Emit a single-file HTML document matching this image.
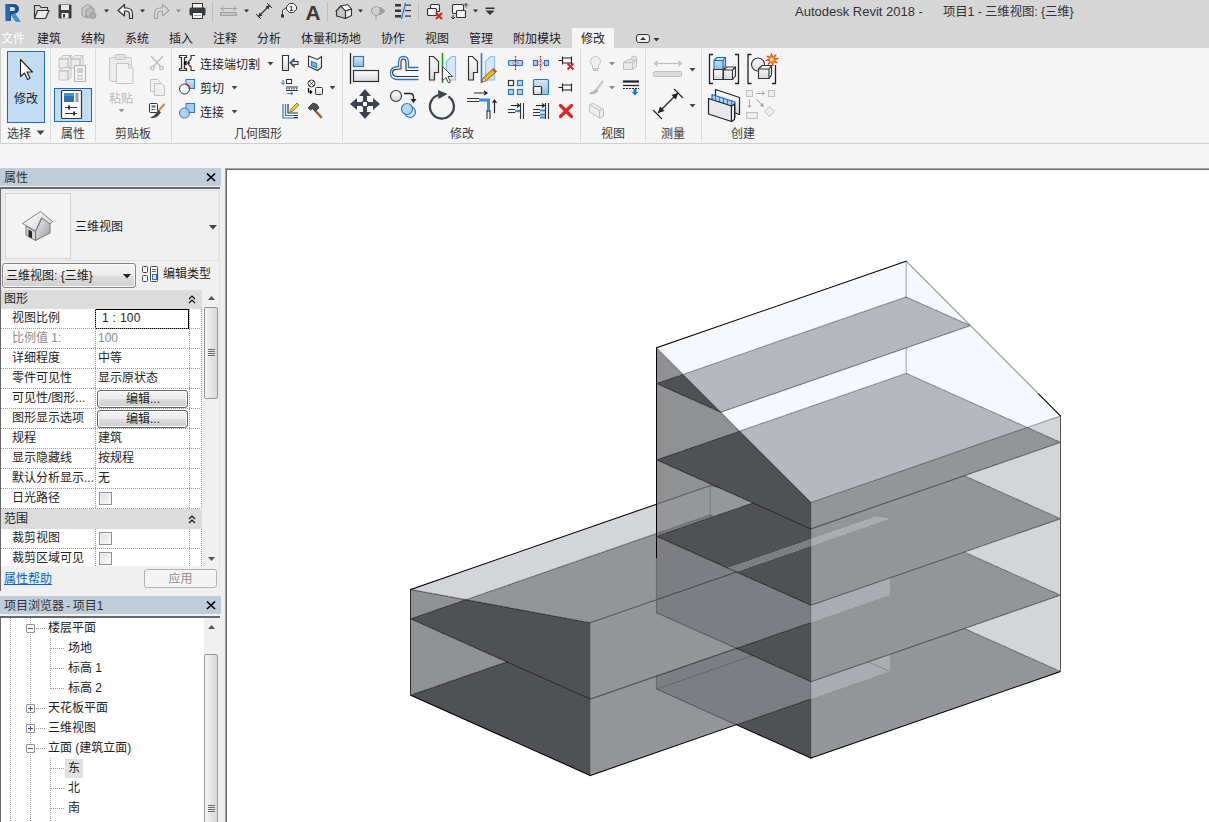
<!DOCTYPE html>
<html lang="zh-CN"><head><meta charset="utf-8"><title>Autodesk Revit 2018 - 项目1 - 三维视图: {三维}</title>
<style>
*{box-sizing:border-box;margin:0;padding:0}
html,body{width:1209px;height:822px;overflow:hidden;background:#f5f5f5}
body{font-family:"Liberation Sans","Noto Sans CJK SC",sans-serif;font-size:12px;color:#1e1e1e;position:relative}
.abs{position:absolute}
.t{position:absolute;white-space:nowrap;line-height:16px}
#titlebar{position:absolute;left:0;top:0;width:1209px;height:48px;background:#d6d6d6}
#ribbon{position:absolute;left:0;top:48px;width:1209px;height:96px;background:#f5f5f5;border-bottom:1px solid #cfcfcf}
.vsep{position:absolute;width:1px;background:#d9d9d9;top:49px;height:93px}
.plabel{position:absolute;top:126px;line-height:16px;white-space:nowrap;color:#3a3a3a}
.ptitle{position:absolute;left:0;width:221px;height:18px;background:#bfcddb;color:#333}
.ptitle span{position:absolute;left:4px;top:2px;line-height:16px}
svg{position:absolute;overflow:visible}
.dh{height:1px;background-image:linear-gradient(to right,#9a9a9a 50%,transparent 50%);background-size:2px 1px}
.dv{width:1px;background-image:linear-gradient(to bottom,#9a9a9a 50%,transparent 50%);background-size:1px 2px}
</style></head>
<body>
<div id="titlebar"></div>
<div class="abs" style="left:572px;top:28px;width:42px;height:21px;background:#f5f5f5"></div>
<div class="t" style="left:795px;top:4px;font-size:13px;color:#333;letter-spacing:0px">Autodesk Revit 2018 -</div>
<div class="t" style="left:943px;top:4px;font-size:12.400px;color:#333;letter-spacing:-0.1px">项目1 - 三维视图: {三维}</div>
<div class="t" style="left:1px;top:31px;color:#fff">文件</div>
<div class="t" style="left:37px;top:31px">建筑</div>
<div class="t" style="left:81px;top:31px">结构</div>
<div class="t" style="left:125px;top:31px">系统</div>
<div class="t" style="left:169px;top:31px">插入</div>
<div class="t" style="left:213px;top:31px">注释</div>
<div class="t" style="left:257px;top:31px">分析</div>
<div class="t" style="left:301px;top:31px">体量和场地</div>
<div class="t" style="left:381px;top:31px">协作</div>
<div class="t" style="left:425px;top:31px">视图</div>
<div class="t" style="left:469px;top:31px">管理</div>
<div class="t" style="left:513px;top:31px">附加模块</div>
<div class="t" style="left:581px;top:31px">修改</div>
<svg id="qat" width="1209" height="48" viewBox="0 0 1209 48" style="left:0;top:0">
<!-- R logo -->
<g>
<path d="M5.500 4h7q6.500 0 6.500 5q0 3.800-4 4.800l5.500 7.700h-4.800l-4.700-7v6.500h-5z" fill="#1d4f8f"/>
<path d="M10 7h2.800q2.400 0 2.400 2t-2.400 2.100h-2.800z" fill="#d6d6d6"/>
<path d="M5.500 4h4.500v17h-4.500z" fill="#2468b4"/>
<path d="M11.500 14l3.500-.5l5.500 8h-4.800z" fill="#3d94de"/>
</g>
<!-- open folder -->
<g stroke="#333" stroke-width="1.2" fill="none" stroke-linejoin="round">
<path d="M34.500 18.500v-13h5l1.500 2h6.500v3" />
<path d="M34.500 18.500l3-8h11.500l-3.500 8z" fill="#e9e9e9"/>
</g>
<!-- save -->
<g>
<rect x="58.500" y="4.500" width="13" height="14" rx="1" fill="#3d3d3d"/>
<rect x="61" y="5" width="8" height="5" fill="#e8e8e8"/>
<rect x="61.500" y="13" width="7" height="5.500" fill="#e8e8e8"/>
<rect x="63" y="14" width="2" height="3.500" fill="#3d3d3d"/>
</g>
<!-- sync (disabled) -->
<g stroke="#9a9a9a" fill="#c9c9c9" stroke-width="1">
<path d="M82 8l5-3.500l5 2v8l-5 3.500l-5-2.500z"/>
<path d="M86 10l4-2.500l4 1.500v6l-4 3l-4-2z" fill="#bdbdbd"/>
<circle cx="93" cy="15.500" r="3" fill="#b0b0b0"/>
</g>
<path d="M104.0 9.500h5l-2.500 3z" fill="#333"/>
<!-- undo -->
<path d="M118 10.500l6.500-6v3.500h2q6 0 6 6v4.500h-3v-4q0-3.500-3.500-3.500h-1.500v5z" fill="#f0f0f0" stroke="#333" stroke-width="1.200" stroke-linejoin="round"/>
<path d="M140.0 9.500h5l-2.500 3z" fill="#333"/>
<!-- redo disabled -->
<path d="M169 10.500l-6.500-6v3.500h-2q-6 0-6 6v4.500h3v-4q0-3.500 3.500-3.500h1.500v5z" fill="#dcdcdc" stroke="#a4a4a4" stroke-width="1.200" stroke-linejoin="round"/>
<path d="M176.0 9.500h5l-2.500 3z" fill="#8a8a8a"/>
<!-- print -->
<g>
<rect x="192.500" y="3.500" width="10" height="5" fill="#f4f4f4" stroke="#333"/>
<rect x="189.500" y="7.500" width="16" height="8" rx="1.500" fill="#3a3a3a"/>
<rect x="192.500" y="12.500" width="10" height="6" fill="#f4f4f4" stroke="#333"/>
<rect x="194" y="15" width="7" height="1" fill="#7aa7d6"/>
</g>
<rect x="212" y="2" width="1" height="20" fill="#bdbdbd"/>
<!-- measure disabled -->
<g stroke="#a0a0a0" fill="none">
<path d="M221 8.500h15M221 8.500l2.500-2.500M221 8.500l2.500 2.500M236 8.500l-2.500-2.500M236 8.500l-2.500 2.500"/>
<rect x="220.500" y="12.500" width="16" height="3" fill="#c4c4c4"/>
</g>
<path d="M244.0 9.500h5l-2.500 3z" fill="#333"/>
<!-- aligned dim -->
<g stroke="#333" stroke-width="1.200" fill="#333">
<path d="M258 17l12-12" />
<path d="M256 14l5 5M267 3l5 5" stroke-width="1"/>
<path d="M258 17l1.500-4.500l3 3zM270 5l-1.500 4.500l-3-3z" stroke="none"/>
</g>
<!-- tag -->
<g stroke="#333" fill="#f4f4f4">
<path d="M282.500 15.500v-5l4-3"/>
<rect x="281.500" y="15" width="2" height="2" fill="#333"/>
<path d="M286.500 6.500l3-3h4l3 3v3l-3 3h-4l-3-3z"/>
</g>
<text x="289.200" y="11" font-family="'Liberation Sans',sans-serif" font-size="7" font-weight="bold" fill="#222">1</text>
<!-- A text -->
<text x="305.500" y="20" font-family="'Liberation Sans',sans-serif" font-size="21" font-weight="bold" fill="#3a3a3a" textLength="15" lengthAdjust="spacingAndGlyphs">A</text>
<rect x="327" y="2" width="1" height="20" fill="#bdbdbd"/>
<!-- 3d house -->
<g stroke="#333" stroke-width="1.100" stroke-linejoin="round">
<path d="M336.500 11l4.500-5l4.500 5v7.500l-9-2.500z" fill="#c4c4c4"/>
<path d="M341 6l6.500-1.500l4 4.500l-6 2z" fill="#fafafa"/>
<path d="M345.500 11l6-2v6.500l-6 3z" fill="#ececec"/>
<path d="M335.500 11.500l5.500-6" fill="none"/>
</g>
<path d="M358.0 9.500h5l-2.500 3z" fill="#333"/>
<!-- section disabled -->
<g stroke="#9e9e9e" fill="#cfcfcf">
<circle cx="376" cy="11" r="4.500"/>
<path d="M380 7l5 4l-5 4z" fill="#9e9e9e"/>
<path d="M376 15.500v4"/>
</g>
<!-- thin lines -->
<g fill="#333">
<rect x="395" y="4" width="6" height="2.500"/><rect x="395" y="9.500" width="6" height="2.500"/><rect x="395" y="15" width="6" height="2.500"/>
<rect x="405" y="4.500" width="6" height="1.200"/><rect x="405" y="10" width="6" height="1.200"/><rect x="405" y="15.500" width="6" height="1.200"/>
<path d="M405.500 3l-4 16" stroke="#2a7de1" stroke-width="1.300" fill="none"/>
</g>
<rect x="418" y="2" width="1" height="20" fill="#bdbdbd"/>
<!-- close hidden -->
<g stroke="#333" fill="#f2f2f2" stroke-width="1.100">
<rect x="430.500" y="4.500" width="9" height="7" rx="1"/>
<rect x="427.500" y="8.500" width="9" height="7" rx="1"/>
<path d="M436 13l6 6M442 13l-6 6" stroke="#d81e1e" stroke-width="2" fill="none"/>
</g>
<!-- switch windows -->
<g stroke="#333" fill="#f2f2f2" stroke-width="1.100">
<rect x="452.500" y="4.500" width="11" height="9" rx="1"/>
<rect x="456.500" y="10.500" width="9" height="7" rx="1"/>
<path d="M466 3.500v4M464 5.500l2-2l2 2M453 15v4M451 17l2 2l2-2" fill="none" stroke-width="1"/>
</g>
<path d="M473.0 9.500h5l-2.500 3z" fill="#333"/>
<path d="M485.500 7.500h9v1.500h-9zM485.500 10.500h9l-4.500 4.500z" fill="#333"/>
<!-- ribbon minimize toggle -->
<g>
<rect x="636.500" y="34.500" width="13" height="8" rx="2.500" fill="#f0f0f0" stroke="#333"/>
<path d="M640 40h6l-3-3z" fill="#333"/>
<path d="M653.500 38h6l-3 3.500z" fill="#333"/>
</g>
</svg>
<div id="ribbon"></div>
<div class="abs" style="left:0;top:48px;width:1px;height:95px;background:#cdcdcd"></div>
<div class="vsep" style="left:50px"></div><div class="vsep" style="left:95px"></div><div class="vsep" style="left:171px"></div><div class="vsep" style="left:342px"></div><div class="vsep" style="left:580px"></div><div class="vsep" style="left:645px"></div><div class="vsep" style="left:701px"></div>
<div class="abs" style="left:7px;top:51px;width:38px;height:72px;background:#c2dcf3;border:1px solid #1a6ac4"></div>
<div class="abs" style="left:54px;top:88px;width:38px;height:34px;background:#c2dcf3;border:1px solid #1a6ac4"></div>
<div class="t" style="left:14px;top:91px">修改</div>
<div class="t" style="left:109px;top:91px;color:#b9b9b9">粘贴</div>
<div class="plabel" style="left:7px">选择</div>
<div class="plabel" style="left:61px">属性</div>
<div class="plabel" style="left:115px">剪贴板</div>
<div class="plabel" style="left:234px">几何图形</div>
<div class="plabel" style="left:450px">修改</div>
<div class="plabel" style="left:601px">视图</div>
<div class="plabel" style="left:661px">测量</div>
<div class="plabel" style="left:731px">创建</div>
<div class="t" style="left:200px;top:57px">连接端切割</div>
<div class="t" style="left:200px;top:81px">剪切</div>
<div class="t" style="left:200px;top:105px">连接</div>
<svg id="rib" width="1209" height="144" viewBox="0 0 1209 144" style="left:0;top:0">
<defs>
<linearGradient id="gw" x1="0" y1="0" x2="0" y2="1"><stop offset="0" stop-color="#ffffff"/><stop offset="1" stop-color="#d4d7dc"/></linearGradient>
<linearGradient id="gb" x1="0" y1="0" x2="0" y2="1"><stop offset="0" stop-color="#d6e8f5"/><stop offset="1" stop-color="#8fbfe0"/></linearGradient>
</defs>
<!-- small arrows -->
<g fill="#444">
<path d="M36.500 130.500h8l-4 4.500z"/>
<path d="M118.500 109h6l-3 3.500z" fill="#9a9a9a"/>
<path d="M267.500 62h6l-3 3.500z"/><path d="M231.500 86h6l-3 3.500z"/><path d="M231.500 110h6l-3 3.500z"/>
<path d="M329.500 86h6l-3 3.500z"/>
<path d="M609 62h6l-3 3.500z" fill="#8a8a8a"/><path d="M609 86h6l-3 3.500z" fill="#8a8a8a"/>
<path d="M689.500 68h6l-3 3.500z"/><path d="M689.500 104h6l-3 3.500z"/>
</g>
<!-- modify cursor -->
<path d="M20.500 59.500v17l4-3.500l3 6.500l2.500-1.200l-3-6.300h5.500z" fill="#fff" stroke="#222" stroke-width="1.100" stroke-linejoin="round"/>
<!-- type properties (disabled) -->
<g stroke="#c4c4c4" fill="#ececec">
<path d="M59 59l4-3.500h8l-3 3.500zM59 59h9v9h-9zM68 59l3-3.500v9l-3 3.500z"/>
<path d="M71 59l4-3.500h8l-3 3.500zM71 59h9v9h-9zM80 59l3-3.500v9l-3 3.500z"/>
<path d="M59 71l4-3.500h8l-3 3.500zM59 71h9v9h-9zM68 71l3-3.500v9l-3 3.500z"/>
<rect x="74.500" y="65.500" width="11" height="16" fill="#f4f4f4" stroke="#b0b0b0"/>
<rect x="77" y="68" width="6" height="5" fill="#cfcfcf" stroke="none"/>
<path d="M77 76h6M77 79h6" stroke="#b0b0b0"/>
</g>
<!-- properties icon -->
<g>
<rect x="61.500" y="90.500" width="20" height="28" rx="1" fill="#fbfbfb" stroke="#333" stroke-width="1.200"/>
<rect x="64" y="93" width="10" height="9" fill="#2f6fb3"/>
<rect x="64" y="93" width="10" height="3" fill="#4c8ccc"/>
<rect x="75.500" y="93" width="3" height="9" fill="#9a9a9a"/>
<path d="M65 107.500h12M65 113.500h12" stroke="#333" stroke-width="1.200"/>
<rect x="68" y="105.500" width="2" height="4" fill="#333"/><rect x="73" y="111.500" width="2" height="4" fill="#333"/>
</g>
<!-- paste disabled -->
<g stroke="#c6c6c6" fill="#ececec">
<rect x="109.500" y="57.500" width="22" height="24" rx="2"/>
<rect x="115.500" y="54.500" width="10" height="5" rx="1.500" fill="#e2e2e2"/>
<path d="M116.500 63.500h12l4.500 4.500v15.500h-16.500z" fill="#f3f3f3"/>
<path d="M128.500 63.500v4.500h4.500" fill="none"/>
</g>
<!-- cut disabled -->
<g stroke="#bdbdbd" stroke-width="1.300" fill="none">
<path d="M151 56l10 11M163 56l-10 11"/><circle cx="152.500" cy="68" r="1.800"/><circle cx="161.500" cy="68" r="1.800"/>
</g>
<!-- copy disabled -->
<g stroke="#c2c2c2" fill="#efefef">
<path d="M150.500 79.500h7l3 3v9h-10z"/><path d="M154.500 83.500h7l3 3v9h-10z"/>
</g>
<!-- match type -->
<g>
<rect x="149.500" y="103.500" width="8" height="9" rx="1" fill="#f6f6f6" stroke="#333"/>
<rect x="151.500" y="105.500" width="4" height="2" fill="#2f6fb3"/><path d="M151.500 109.500h2M154.500 109.500h1" stroke="#333"/>
<path d="M164.500 104l-7 8" stroke="#c58a3a" stroke-width="2"/>
<path d="M158.500 110l-3 4q-2 3-5.500 3.500q5 1.500 8-1.500l3-3.500z" fill="#3d4450"/>
</g>
<!-- cope -->
<g stroke="#333" stroke-width="1.200" fill="url(#gw)">
<path d="M179.500 55.500h7v2h-2v11h2v2h-7v-2h2v-11h-2z"/>
<path d="M195 55.500h-4v3.500l-2.500 2.500v3l2.500 2.500v3.500h4" fill="none"/>
<path d="M184 63h6M184 63l2.500-2M184 63l2.500 2" fill="none" stroke="#000"/>
</g>
<!-- cut geometry -->
<g>
<rect x="187.500" y="79.500" width="7" height="9" fill="url(#gb)" stroke="#2a78c8"/>
<rect x="186" y="79.500" width="8.500" height="9" fill="url(#gb)" stroke="#2a78c8"/>
<circle cx="184.500" cy="89" r="5" fill="#fbfbfb" stroke="#333"/>
<path d="M186 84.200a5 5 0 0 1 3.400 5" stroke="#e01010" stroke-width="1.400" fill="none"/>
</g>
<!-- join geometry -->
<g>
<rect x="186" y="103.500" width="8.500" height="9" fill="#a9cde8" stroke="#2a78c8"/>
<circle cx="184.500" cy="113" r="5" fill="#a9cde8" fill-opacity="0.85" stroke="#2a78c8"/>
</g>
<!-- unjoin/cope2 -->
<g stroke="#333" stroke-width="1.100">
<path d="M282.500 55.500h6v15h-6z" fill="url(#gw)"/>
<path d="M290 63l4-4v2.500h4v3h-4v2.500z" fill="#dfe3e8"/>
<path d="M291 63l2.500-2.200M291 63l2.500 2.200" stroke="#2a78c8" fill="none"/>
</g>
<!-- wall opening -->
<g stroke="#333" stroke-width="1.100">
<path d="M308.500 56l9 3.500l4-3v11l-4 3l-9-4z" fill="url(#gw)"/>
<path d="M311.500 61.500l5 1.800v4.200l-5-1.800z" fill="#7fb4e0" stroke="#2a78c8"/>
</g>
<!-- beam/column joins -->
<g>
<path d="M283 80v4M281.500 82.500l1.500 2l1.500-2" stroke="#2a78c8" fill="none"/>
<rect x="286.500" y="79.500" width="5" height="4" fill="#fff" stroke="#333"/>
<path d="M286 87h12M286 90.500h12" stroke="#333" stroke-width="1.200"/>
<path d="M286 88.800h12" stroke="#333" stroke-dasharray="1.500 1"/>
<path d="M287 93.500h6M291 92l2 1.500l-2 1.500" stroke="#2a78c8" fill="none"/>
</g>
<!-- switch join order -->
<g stroke="#333">
<circle cx="311.500" cy="83.500" r="3.500" fill="#f4f4f4"/><path d="M309 81l5 5M314 81l-5 5" stroke-width="0.800"/>
<rect x="315.500" y="87.500" width="7" height="7" rx="1" fill="url(#gw)"/>
<path d="M308.500 88v4h3M310 90.500l1.800 1.500l-1.800 1.500" fill="none" stroke="#000" stroke-width="1.200"/>
</g>
<!-- paint -->
<g>
<path d="M283 104v14h15" stroke="#2a78c8" stroke-width="1.200" fill="none"/>
<path d="M285.500 104v11.500h12" stroke="#2a78c8" stroke-width="1.200" fill="none"/>
<path d="M288 104v9h10" stroke="#333" stroke-width="1.200" fill="none"/>
<path d="M290 112l1-3l6-6l2 2l-6 6z" fill="#f2c230" stroke="#7a5a10" stroke-width="0.700"/>
<path d="M294 115.500h4M294 117.500h4" stroke="#333"/>
</g>
<!-- demolish hammer -->
<g>
<path d="M313 108l8 9" stroke="#9a5a48" stroke-width="2.600" stroke-linecap="round"/>
<path d="M308 108l5-5l4 1.500l2 3.500l-4 3l-2.500-2.500l-2 1.500z" fill="#4a4f58" stroke="#2c2f35" stroke-width="0.800"/>
</g>
<!-- ALIGN -->
<g>
<path d="M350.500 53v31" stroke="#222" stroke-width="1.300"/>
<rect x="353.500" y="56.500" width="10" height="10" fill="url(#gb)" stroke="#2a78c8" stroke-width="1.200"/>
<rect x="353.500" y="70.500" width="25" height="11" fill="url(#gw)" stroke="#333" stroke-width="1.200"/>
</g>
<!-- OFFSET -->
<g fill="none">
<path d="M418.500 67.500h-10v-5q0-6-5-6t-5 6v4q-8 0-8 6.500t7 6.500h21" stroke="#2a78c8" stroke-width="1.300"/>
<path d="M418.500 70.500h-12.500v-8q0-3.500-2.500-3.500t-2.500 3.500v6.500q-8.500-.5-8.500 3.500t5 4h21" stroke="#333" stroke-width="1.100"/>
</g>
<!-- MIRROR pick -->
<g>
<path d="M429.500 56.500h4l5 5v11h-4v7.500h-5z" fill="url(#gw)" stroke="#333" stroke-width="1.200"/>
<path d="M455.500 56.500h-4l-5 5v18.500h9z" fill="#d4e8f6" stroke="#8fbfe0" stroke-width="1.200"/>
<path d="M442.500 53v30" stroke="#16a016" stroke-width="1.600"/>
<path d="M442.500 66.500v14l3.500-3l2.500 5.500l2-1l-2.500-5.500h4.500z" fill="#fff" stroke="#333" stroke-width="0.900"/>
</g>
<!-- MIRROR draw -->
<g>
<path d="M468.500 56.500h4l5 5v11h-4v7.500h-5z" fill="url(#gw)" stroke="#333" stroke-width="1.200"/>
<path d="M494.500 56.500h-4l-5 5v18.500h9z" fill="#d4e8f6" stroke="#8fbfe0" stroke-width="1.200"/>
<path d="M481.500 53v30" stroke="#2a78c8" stroke-width="1.600"/>
<path d="M482 82l1.500-4.500l10-9l3 3l-10 9z" fill="#f4b820" stroke="#6b4a10" stroke-width="0.800"/>
<path d="M482 82l1.500-4.500l3 3z" fill="#f6e6c8" stroke="#6b4a10" stroke-width="0.600"/>
<path d="M492 69.800l1.800-1.600l3 3l-1.800 1.600z" fill="#b5651d"/>
</g>
<!-- MOVE -->
<g fill="#3d4450">
<path d="M365 89l6 7h-4v5h-4v-5h-4zM365 119l6-7h-4v-5h-4v5h-4zM350 104l7-6v4h5v4h-5v4zM380 104l-7-6v4h-5v4h5v4z"/>
<rect x="362.500" y="101.500" width="5" height="5" fill="#fff" stroke="#3d4450"/>
</g>
<!-- COPY -->
<g>
<circle cx="396" cy="96" r="5.500" fill="url(#gw)" stroke="#333" stroke-width="1.100"/>
<path d="M404 93.500h6q3.500 0 3.500 3.500v3" fill="none" stroke="#222" stroke-width="1.300"/><path d="M410.500 99h6l-3 4z" fill="#222"/>
<circle cx="410" cy="112" r="5.500" fill="#d4e8f6" stroke="#2a78c8" stroke-width="1.200"/>
<circle cx="407" cy="109" r="5.500" fill="#b5d6ee" stroke="#2a78c8" stroke-width="1.200"/>
</g>
<!-- ROTATE -->
<g>
<path d="M448.500 96.500a12 12 0 1 1 -10 -1.500" fill="none" stroke="#3d4450" stroke-width="2.300"/>
<path d="M438 90l9.500 4l-9 5z" fill="#3d4450"/>
</g>
<!-- TRIM -->
<g fill="none">
<path d="M467 98.500h12M467 101.500h12" stroke="#333" stroke-width="1.100"/>
<path d="M479 100h9.500v12" stroke="#3b8eea" stroke-width="3"/>
<path d="M487 110v9M490 110v9" stroke="#333" stroke-width="1.100"/>
<path d="M474 93h13M484 91l3 2l-3 2" stroke="#222" stroke-width="1.200"/>
<path d="M494.500 113v-13M492.500 103l2-3l2 3" stroke="#222" stroke-width="1.200"/>
</g>
<!-- small modify icons col1 -->
<g>
<rect x="508.500" y="60.500" width="14" height="5" rx="1" fill="#b5d6ee" stroke="#2a78c8" stroke-width="1.200"/>
<path d="M515.500 56v14" stroke="#e01010" stroke-dasharray="1.500 1" stroke-width="1.200"/>
<circle cx="515.500" cy="63" r="2.500" fill="none" stroke="#e01010" stroke-dasharray="1 1" stroke-width="0.800"/>
</g>
<g>
<rect x="533.500" y="60.500" width="4" height="5" fill="#b5d6ee" stroke="#2a78c8" stroke-width="1.200"/><rect x="544.500" y="60.500" width="4" height="5" fill="#b5d6ee" stroke="#2a78c8" stroke-width="1.200"/>
<path d="M540.500 56v14" stroke="#e01010" stroke-dasharray="1.500 1" stroke-width="1.200"/>
<circle cx="540.500" cy="63" r="2.500" fill="none" stroke="#e01010" stroke-dasharray="1 1" stroke-width="0.800"/>
</g>
<g>
<path d="M558.500 60.500h4M562.500 56.500v8M571.500 56.500v8M562.500 58h9M562.500 63h9" stroke="#222" fill="none" stroke-width="1.100"/>
<path d="M567.500 63.500l6 6M573.500 63.500l-6 6" stroke="#d81e1e" stroke-width="1.800"/>
</g>
<g fill="#b5d6ee" stroke="#2a78c8" stroke-width="1.200">
<rect x="508.500" y="80.500" width="5" height="5" fill="#fff" stroke="#333"/><rect x="517.500" y="80.500" width="5" height="5"/><rect x="508.500" y="89.500" width="5" height="5"/><rect x="517.500" y="89.500" width="5" height="5"/>
</g>
<g>
<rect x="533.500" y="79.500" width="15" height="15" rx="1" fill="url(#gb)" stroke="#2a78c8" stroke-width="1.200"/>
<rect x="533.500" y="86.500" width="8" height="8" rx="1" fill="url(#gw)" stroke="#333" stroke-width="1.200"/>
</g>
<g><path d="M558.500 87.500h4M562.500 83.500v8M571.500 83.500v8M562.500 85h9M562.500 90h9" stroke="#222" fill="none" stroke-width="1.100"/></g>
<g fill="none">
<path d="M508 109.500h7M508 112.500h7" stroke="#333" stroke-width="1.100"/><path d="M515 111h6" stroke="#3b8eea" stroke-width="2.400"/>
<path d="M520.500 103v16M523.500 103v16" stroke="#333" stroke-width="1.100"/>
<path d="M511 105.500h8M517 103.500l2.500 2l-2.500 2" stroke="#222" stroke-width="1.100"/>
</g>
<g fill="none">
<path d="M533 109.500h7M533 112.500h7M533 115.500h7" stroke="#333" stroke-width="1.100"/><path d="M540 110.500h6M540 114.500h6M540 117.500h6" stroke="#3b8eea" stroke-width="1.800"/>
<path d="M545.500 103v16M548.500 103v16" stroke="#333" stroke-width="1.100"/>
<path d="M536 105.500h8M542 103.500l2.500 2l-2.500 2" stroke="#222" stroke-width="1.100"/>
</g>
<path d="M560.500 105.500l11 11M571.500 105.500l-11 11" stroke="#e02424" stroke-width="3.200" stroke-linecap="round"/>
<!-- view panel disabled icons -->
<g stroke="#c0c0c0" fill="#f0f0f0">
<path d="M590.500 61.500a5 5 0 1 1 10 0q0 2-2 4v3h-6v-3q-2-2-2-4z"/><rect x="593.500" y="68.500" width="4" height="2" fill="#d8d8d8"/>
<path d="M623.500 62.500l5-3h8l-4 3zM623.500 62.500h9v7h-9zM632.500 62.500l4-3v7l-4 3z" fill="#e8e8e8"/>
<circle cx="634" cy="58.500" r="2.500" fill="#e4e4e4"/>
<path d="M590 93q4-1 6-4l2 2q-2 3-8 3z" fill="#bdbdbd" stroke="#b0b0b0"/><path d="M597 89l6-8" stroke="#c8c8c8" stroke-width="2.200"/>
<path d="M589.500 104.500l4-1l10 6v7l-4 1.500l-10-6z" fill="#eeeeee"/><path d="M589.500 104.500l10 6v7.500M599.500 110.500l4-1.500" fill="none"/>
</g>
<g>
<path d="M623 81.500h16" stroke="#222" stroke-width="2.200"/><path d="M623 85.500h16" stroke="#222" stroke-width="1.200"/><path d="M623 88.500h16" stroke="#222" stroke-dasharray="2 1"/>
<path d="M633.500 89h3v3h2l-3.500 3.500l-3.500-3.500h2z" fill="#1e78e0"/>
</g>
<!-- measure 1 disabled -->
<g stroke="#c0c0c0" fill="#c0c0c0">
<path d="M655 63.500h26" fill="none" stroke-width="1.200"/><path d="M653.500 63.500l4-3.500v7zM682.500 63.500l-4-3.500v7z" stroke="none"/>
<rect x="653.500" y="71.500" width="28" height="5" rx="1" fill="#dcdcdc"/>
</g>
<!-- measure 2 aligned dim -->
<g stroke="#222" fill="#222">
<path d="M658 113l20-20" stroke-width="1.300"/><path d="M653 110l9 9M674 89l9 9" stroke-width="1.100"/>
<path d="M658 113l2-6.500l4.500 4.500zM678 93l-2 6.500l-4.500-4.500z" stroke="none"/>
</g>
<!-- create 1 -->
<g>
<path d="M713 54.500h-3.500v29h3.500M735 54.500h3.500v29h-3.500" stroke="#222" stroke-width="1.300" fill="none"/>
<path d="M714 60.500l3-3h8.500l-2.500 3zM714 60.500h9v9h-9zM723 60.500l2.500-3v8.500l-2.500 3.500z" fill="url(#gb)" stroke="#1a6ac4" stroke-width="1.100" stroke-linejoin="round"/>
<path d="M713.500 69.500h9.500v10h-9.500z" fill="url(#gw)" stroke="#333" stroke-width="1.100"/>
<path d="M723.500 70l3.500-3h8.500l-3 3zM723.500 70h9v9.500h-9zM732.500 70l3-3v9l-3 3.500z" fill="url(#gw)" stroke="#333" stroke-width="1.100" stroke-linejoin="round"/>
</g>
<!-- create 2 -->
<g>
<path d="M751.500 54.500h-3.500v29h3.500M775.500 65v18.500h-3.500" stroke="#222" stroke-width="1.300" fill="none"/>
<circle cx="758" cy="64.500" r="6.500" fill="url(#gw)" stroke="#333" stroke-width="1.100"/>
<path d="M758.500 69l3.500-3.500h9.500l-2.500 3.500zM758.500 69h10.500v9.500h-10.500zM769 69l2.500-3.500v9.500l-2.500 3.500z" fill="url(#gw)" stroke="#333" stroke-width="1.100" stroke-linejoin="round"/>
<path d="M771.500 53l1.200 4l3.500-2.500l-2 3.800l4.300.2l-4 1.500l3 3l-4-1.200l-.5 4.200l-1.500-4l-3.500 2.500l2-3.800l-4.300-.2l4-1.500l-3-3l4 1.200z" fill="#f6a800" stroke="#e0301e" stroke-width="0.800"/>
<circle cx="771.500" cy="59.500" r="1.600" fill="#fff6c0"/>
</g>
<!-- create 3 model group -->
<g stroke="#222" stroke-width="1.200" stroke-linejoin="round">
<path d="M715.500 89.500l24 8v17l-24-8z" fill="url(#gw)"/>
<path d="M712 94.500l23 7.500v15.500l-23-7.500z" fill="#a4cfee" stroke="#1a6ac4"/>
<path d="M715.500 95.600v14M719.500 97v14M723.500 98.300v14M727.500 99.600v14M731.500 101v14" stroke="#1a6ac4" stroke-width="0.800"/>
<path d="M708.500 98.500l23 7.500v15.500l-23-7.500z" fill="#e6e8ec"/>
<path d="M731.500 106l3-2v15.500l-3 2z" fill="#fff"/>
</g>
<!-- create 4 disabled -->
<g stroke="#c2c2c2" fill="#ececec">
<rect x="746.500" y="90.500" width="6" height="6"/><rect x="768.500" y="90.500" width="6" height="6"/><rect x="746.500" y="112.500" width="11" height="6"/>
<path d="M769.500 106.500l5 5l-5 5l-5-5z"/>
<path d="M756 93.500h8M762 91.500l2.500 2l-2.500 2M749.500 99v8M747.500 105l2 2.500l2-2.500M756 99l7 7" fill="none" stroke="#aaa"/><path d="M764 107l-4.500-1l3.500-3.500z" fill="#aaa" stroke="none"/>
</g>
</svg>
<div class="ptitle" style="top:168px"><span>属性</span></div>
<svg width="12" height="12" style="left:205px;top:171px" viewBox="0 0 12 12"><path d="M2 2.500l8 7.500M10 2.500l-8 7.500" stroke="#000" stroke-width="1.700" fill="none"/></svg>
<div class="abs" style="left:0;top:186px;width:221px;height:410px;background:#f0f0f0"></div>
<div class="abs" style="left:0;top:187px;width:220px;height:2px;background:#696969"></div>
<div class="abs" style="left:0;top:187px;width:1px;height:404px;background:#696969"></div>
<div class="abs" style="left:219px;top:189px;width:1px;height:402px;background:#e3e3e3"></div>
<div class="abs" style="left:2px;top:190px;width:217px;height:71px;background:#f0f0f0;border:1px solid #e2e2e2"></div>
<div class="abs" style="left:5px;top:193px;width:66px;height:66px;background:#f4f4f4;border:1px solid #d2d2d2"></div>
<svg width="34" height="34" style="left:21px;top:209px" viewBox="21 209 34 34">
<defs><linearGradient id="hr" x1="0" y1="0" x2="1" y2="1"><stop offset="0" stop-color="#ffffff"/><stop offset="1" stop-color="#cfd2d6"/></linearGradient>
<linearGradient id="hw" x1="0" y1="0" x2="1" y2="1"><stop offset="0" stop-color="#ededed"/><stop offset="1" stop-color="#9b9da2"/></linearGradient></defs>
<path d="M26 226l9.500 5.500v9l-9.500-5.500z" fill="#d2d3d5" stroke="#6e6e6e" stroke-width="0.900" stroke-linejoin="round"/>
<path d="M35.500 231.500l6.500-13l8 5v9.500l-14.500 7.500z" fill="url(#hw)" stroke="#6e6e6e" stroke-width="0.900" stroke-linejoin="round"/>
<path d="M22.500 223.500l18-12l12 10l-2.500 2.500l-8.500-6.500l-6 13.500z" fill="url(#hr)" stroke="#777" stroke-width="0.900" stroke-linejoin="round"/>
<path d="M28.500 229.500l3.500 2v7l-3.500-2z" fill="#262626"/>
</svg>
<div class="t" style="left:75px;top:219px">三维视图</div>
<svg width="8" height="5" style="left:209px;top:225px" viewBox="0 0 8 5"><path d="M0 0h8l-4 4.500z" fill="#444"/></svg>
<div class="abs" style="left:2px;top:263px;width:134px;height:25px;border:1px solid #858585;border-radius:3px;background:linear-gradient(#f5f5f5 0%,#ececec 48%,#dedede 52%,#d0d0d0 100%);box-shadow:inset 0 0 0 1px #fafafa"></div>
<div class="t" style="left:6px;top:268px">三维视图: {三维}</div>
<svg width="8" height="5" style="left:123px;top:274px" viewBox="0 0 8 5"><path d="M0 0h8l-4 4.500z" fill="#222"/></svg>
<svg width="18" height="18" style="left:141px;top:265px" viewBox="0 0 18 18"><g fill="#f6f6f6" stroke="#444"><rect x="1.500" y="1.500" width="5" height="6" rx="1"/><rect x="1.500" y="10.500" width="5" height="6" rx="1"/><rect x="9.500" y="1.500" width="7" height="15" rx="1"/><rect x="11.500" y="9.500" width="4" height="5" fill="#d0e4f6" stroke="#2a78c8"/></g><path d="M11 4.500h4M11 6.500h4" stroke="#666"/></svg>
<div class="t" style="left:163px;top:266px">编辑类型</div>
<div class="abs" style="left:1px;top:290px;width:201px;height:19px;background:#dcdcdc"></div>
<div class="t" style="left:4px;top:291px">图形</div>
<svg width="8" height="9" style="left:188px;top:295px" viewBox="0 0 8 9"><path d="M1 4l3-3l3 3M1 8l3-3l3 3" stroke="#111" stroke-width="1.200" fill="none"/></svg>
<div class="abs" style="left:1px;top:309px;width:200px;height:20px;background:#fff"></div>
<div class="t" style="left:12px;top:310px;color:#1e1e1e">视图比例</div>
<div class="abs" style="left:95px;top:309px;width:94px;height:20px;border:1px solid #000;background:#fff"></div>
<div class="t" style="left:102px;top:310px;letter-spacing:0.3px">1 : 100</div>
<div class="abs dh" style="left:1px;top:328px;width:200px"></div>
<div class="abs" style="left:1px;top:329px;width:200px;height:20px;background:#fff"></div>
<div class="t" style="left:12px;top:330px;color:#8c8c8c">比例值 1:</div>
<div class="t" style="left:98px;top:330px;color:#8c8c8c">100</div>
<div class="abs dh" style="left:1px;top:348px;width:200px"></div>
<div class="abs" style="left:1px;top:349px;width:200px;height:20px;background:#fff"></div>
<div class="t" style="left:12px;top:350px;color:#1e1e1e">详细程度</div>
<div class="t" style="left:98px;top:350px;color:#1e1e1e">中等</div>
<div class="abs dh" style="left:1px;top:368px;width:200px"></div>
<div class="abs" style="left:1px;top:369px;width:200px;height:20px;background:#fff"></div>
<div class="t" style="left:12px;top:370px;color:#1e1e1e">零件可见性</div>
<div class="t" style="left:98px;top:370px;color:#1e1e1e">显示原状态</div>
<div class="abs dh" style="left:1px;top:388px;width:200px"></div>
<div class="abs" style="left:1px;top:389px;width:200px;height:20px;background:#fff"></div>
<div class="t" style="left:12px;top:390px;color:#1e1e1e">可见性/图形...</div>
<div class="abs" style="left:97px;top:390px;width:91px;height:18px;border:1px solid #626262;border-radius:3px;background:linear-gradient(#f4f4f4 0%,#ebebeb 48%,#dddddd 52%,#cdcdcd 100%);box-shadow:inset 0 0 0 1px #fcfcfc"></div>
<div class="t" style="left:97px;top:391px;width:92px;text-align:center">编辑...</div>
<div class="abs dh" style="left:1px;top:408px;width:200px"></div>
<div class="abs" style="left:1px;top:409px;width:200px;height:20px;background:#fff"></div>
<div class="t" style="left:12px;top:410px;color:#1e1e1e">图形显示选项</div>
<div class="abs" style="left:97px;top:410px;width:91px;height:18px;border:1px solid #626262;border-radius:3px;background:linear-gradient(#f4f4f4 0%,#ebebeb 48%,#dddddd 52%,#cdcdcd 100%);box-shadow:inset 0 0 0 1px #fcfcfc"></div>
<div class="t" style="left:97px;top:411px;width:92px;text-align:center">编辑...</div>
<div class="abs dh" style="left:1px;top:428px;width:200px"></div>
<div class="abs" style="left:1px;top:429px;width:200px;height:20px;background:#fff"></div>
<div class="t" style="left:12px;top:430px;color:#1e1e1e">规程</div>
<div class="t" style="left:98px;top:430px;color:#1e1e1e">建筑</div>
<div class="abs dh" style="left:1px;top:448px;width:200px"></div>
<div class="abs" style="left:1px;top:449px;width:200px;height:20px;background:#fff"></div>
<div class="t" style="left:12px;top:450px;color:#1e1e1e">显示隐藏线</div>
<div class="t" style="left:98px;top:450px;color:#1e1e1e">按规程</div>
<div class="abs dh" style="left:1px;top:468px;width:200px"></div>
<div class="abs" style="left:1px;top:469px;width:200px;height:20px;background:#fff"></div>
<div class="t" style="left:12px;top:470px;color:#1e1e1e">默认分析显示...</div>
<div class="t" style="left:98px;top:470px;color:#1e1e1e">无</div>
<div class="abs dh" style="left:1px;top:488px;width:200px"></div>
<div class="abs" style="left:1px;top:489px;width:200px;height:20px;background:#fff"></div>
<div class="t" style="left:12px;top:490px;color:#1e1e1e">日光路径</div>
<div class="abs" style="left:99px;top:492px;width:13px;height:13px;border:1px solid #8e8f8f;background:linear-gradient(135deg,#dcdcdc,#ffffff);box-shadow:inset 0 0 0 1px #f4f4f4"></div>
<div class="abs dh" style="left:1px;top:508px;width:200px"></div>
<div class="abs" style="left:1px;top:509px;width:201px;height:20px;background:#dcdcdc"></div>
<div class="t" style="left:4px;top:511px">范围</div>
<svg width="8" height="9" style="left:188px;top:515px" viewBox="0 0 8 9"><path d="M1 4l3-3l3 3M1 8l3-3l3 3" stroke="#111" stroke-width="1.200" fill="none"/></svg>
<div class="abs" style="left:1px;top:529px;width:200px;height:20px;background:#fff"></div>
<div class="t" style="left:12px;top:530px;color:#1e1e1e">裁剪视图</div>
<div class="abs" style="left:99px;top:532px;width:13px;height:13px;border:1px solid #8e8f8f;background:linear-gradient(135deg,#dcdcdc,#ffffff);box-shadow:inset 0 0 0 1px #f4f4f4"></div>
<div class="abs dh" style="left:1px;top:548px;width:200px"></div>
<div class="abs" style="left:1px;top:549px;width:200px;height:20px;background:#fff"></div>
<div class="t" style="left:12px;top:550px;color:#1e1e1e">裁剪区域可见</div>
<div class="abs" style="left:99px;top:552px;width:13px;height:13px;border:1px solid #8e8f8f;background:linear-gradient(135deg,#dcdcdc,#ffffff);box-shadow:inset 0 0 0 1px #f4f4f4"></div>
<div class="abs dh" style="left:1px;top:568px;width:200px"></div>
<div class="abs dv" style="left:95px;top:309px;height:200px"></div>
<div class="abs dv" style="left:189px;top:309px;height:200px"></div>
<div class="abs dv" style="left:201px;top:309px;height:200px"></div><div class="abs dv" style="left:201px;top:529px;height:38px"></div>
<div class="abs dv" style="left:95px;top:529px;height:38px"></div>
<div class="abs dv" style="left:189px;top:529px;height:38px"></div>
<div class="abs" style="left:1px;top:566px;width:218px;height:26px;background:#f0f0f0"></div>
<div class="abs" style="left:204px;top:290px;width:15px;height:276px;background:#f0f0f0"></div>
<svg width="7" height="4" style="left:208px;top:296px" viewBox="0 0 7 4"><path d="M0 4l3.500-4l3.500 4z" fill="#555"/></svg>
<svg width="7" height="4" style="left:208px;top:557px" viewBox="0 0 7 4"><path d="M0 0l3.500 4l3.500-4z" fill="#555"/></svg>
<div class="abs" style="left:204px;top:307px;width:14px;height:92px;border:1px solid #979797;border-radius:2px;background:linear-gradient(to right,#f3f3f3,#dadada)"></div>
<div class="abs" style="left:208px;top:349px;width:7px;height:7px;background:repeating-linear-gradient(#6b6b6b 0 1px,transparent 1px 2px)"></div>
<div class="t" style="left:4px;top:571px;color:#0066cc;text-decoration:underline">属性帮助</div>
<div class="abs" style="left:144px;top:569px;width:73px;height:19px;border:1px solid #adb2b5;border-radius:3px;background:#f4f4f4"></div>
<div class="t" style="left:144px;top:571px;width:73px;text-align:center;color:#8f8f8f">应用</div>
<div class="ptitle" style="top:596px"><span style="word-spacing:-1px">项目浏览器 - 项目1</span></div>
<svg width="12" height="12" style="left:205px;top:599px" viewBox="0 0 12 12"><path d="M2 2.500l8 7.500M10 2.500l-8 7.500" stroke="#000" stroke-width="1.700" fill="none"/></svg>
<div class="abs" style="left:0;top:614px;width:221px;height:208px;background:#f0f0f0"></div>
<div class="abs" style="left:0;top:616px;width:220px;height:206px;background:#fff;border-top:2px solid #696969;border-left:1px solid #696969"></div>
<div class="abs dv" style="left:10px;top:618px;height:204px"></div>
<div class="abs dv" style="left:30px;top:618px;height:204px"></div>
<div class="abs dv" style="left:50px;top:638px;height:51px"></div>
<div class="abs dv" style="left:50px;top:758px;height:64px"></div>
<div class="abs dh" style="left:36px;top:628px;width:10px"></div>
<div class="abs" style="left:26px;top:624px;width:9px;height:9px;border:1px solid #919191;background:#fff;border-radius:1px"></div>
<div class="abs" style="left:28px;top:628px;width:5px;height:1px;background:#3c5a9a"></div>
<div class="t" style="left:48px;top:620px">楼层平面</div>
<div class="abs dh" style="left:51px;top:648px;width:14px"></div>
<div class="t" style="left:68px;top:640px">场地</div>
<div class="abs dh" style="left:51px;top:668px;width:14px"></div>
<div class="t" style="left:68px;top:660px">标高 1</div>
<div class="abs dh" style="left:51px;top:688px;width:14px"></div>
<div class="t" style="left:68px;top:680px">标高 2</div>
<div class="abs dh" style="left:36px;top:708px;width:10px"></div>
<div class="abs" style="left:26px;top:704px;width:9px;height:9px;border:1px solid #919191;background:#fff;border-radius:1px"></div>
<div class="abs" style="left:28px;top:708px;width:5px;height:1px;background:#3c5a9a"></div>
<div class="abs" style="left:30px;top:706px;width:1px;height:5px;background:#3c5a9a"></div>
<div class="t" style="left:48px;top:700px">天花板平面</div>
<div class="abs dh" style="left:36px;top:728px;width:10px"></div>
<div class="abs" style="left:26px;top:724px;width:9px;height:9px;border:1px solid #919191;background:#fff;border-radius:1px"></div>
<div class="abs" style="left:28px;top:728px;width:5px;height:1px;background:#3c5a9a"></div>
<div class="abs" style="left:30px;top:726px;width:1px;height:5px;background:#3c5a9a"></div>
<div class="t" style="left:48px;top:720px">三维视图</div>
<div class="abs dh" style="left:36px;top:748px;width:10px"></div>
<div class="abs" style="left:26px;top:744px;width:9px;height:9px;border:1px solid #919191;background:#fff;border-radius:1px"></div>
<div class="abs" style="left:28px;top:748px;width:5px;height:1px;background:#3c5a9a"></div>
<div class="t" style="left:48px;top:740px">立面 (建筑立面)</div>
<div class="abs dh" style="left:51px;top:768px;width:14px"></div>
<div class="abs" style="left:65px;top:759px;width:18px;height:19px;background:#e2e2e2"></div>
<div class="t" style="left:68px;top:760px">东</div>
<div class="abs dh" style="left:51px;top:788px;width:14px"></div>
<div class="t" style="left:68px;top:780px">北</div>
<div class="abs dh" style="left:51px;top:808px;width:14px"></div>
<div class="t" style="left:68px;top:800px">南</div>
<div class="abs" style="left:204px;top:618px;width:16px;height:204px;background:#f0f0f0"></div>
<svg width="7" height="4" style="left:208px;top:625px" viewBox="0 0 7 4"><path d="M0 4l3.500-4l3.500 4z" fill="#555"/></svg>
<div class="abs" style="left:204px;top:654px;width:14px;height:180px;border:1px solid #979797;border-radius:2px;background:linear-gradient(to right,#f3f3f3,#dadada)"></div>
<div class="abs" style="left:208px;top:805px;width:7px;height:7px;background:repeating-linear-gradient(#6b6b6b 0 1px,transparent 1px 2px)"></div>
<div class="abs" style="left:221px;top:168px;width:4px;height:654px;background:#f0f0f0"></div>
<div class="abs" style="left:225px;top:168px;width:984px;height:654px;background:#6b6b6b"></div>
<div class="abs" style="left:225px;top:168px;width:984px;height:1px;background:#a3a3a3"></div>
<div class="abs" style="left:225px;top:168px;width:1px;height:654px;background:#a3a3a3"></div>
<div id="viewport" class="abs" style="left:227px;top:170px;width:982px;height:652px;background:#fff;overflow:hidden">
<svg width="1209" height="822" viewBox="0 0 1209 822" style="left:-227px;top:-170px">
<g shape-rendering="crispEdges">
<path fill="rgb(124,126,131)" d="M710.2,514.9 656.5,533.5 656.5,536.3 713.7,516.5ZM727.3,567.9 656.5,536.3 656.5,599.7 656.5,609.9 656.5,612.7 736.3,648.4 793.5,628.5 810.9,622.5 810.9,605.3 752.8,579.3 736.4,572.0 793.7,552.2 810.9,546.2 810.9,538.9 784.5,548.1ZM810.9,681.7 752.8,655.7 736.3,648.4 656.5,676.0 656.5,689.1 736.3,724.8 810.9,698.9Z"/>
<path fill="rgb(147,149,153)" d="M810.9,528.9 810.9,538.9 876.2,516.3 889.8,518.8 810.9,546.2 810.9,559.2 810.9,559.9 810.9,605.3 868.1,585.5 889.8,577.9 889.8,595.1 810.9,622.5 810.9,635.6 810.9,636.3 810.9,681.7 868.1,661.9 889.8,654.3 889.8,671.5 810.9,698.9 810.9,758.1 1060.6,671.5 964.3,628.5 1060.6,595.1 964.3,552.1 1060.6,518.7 964.3,475.7 1060.6,442.3 1027.3,427.4 931.1,460.8 810.9,502.5 810.9,504.2ZM590.2,632.9 590.2,699.1 590.2,775.5 736.3,724.8 656.5,689.1 656.5,676.0 736.3,648.4 656.5,612.7 656.5,609.9 656.5,599.7 656.5,536.3 656.5,533.5 465.7,599.7 590.2,622.8Z"/>
<path fill="rgb(80,81,84)" d="M683.0,374.3 656.5,383.5 720.8,412.2ZM752.8,502.9 713.7,516.5 656.5,536.3 727.3,567.9 784.5,548.1 810.9,538.9 810.9,528.9 810.9,504.2 810.9,502.5 796.3,487.8 739.6,431.1 656.5,459.9 716.6,486.8ZM752.8,579.3 810.9,605.3 810.9,559.9 810.9,559.2 810.9,546.2 793.7,552.2 736.4,572.0ZM506.8,661.8 410.6,695.2 590.2,775.5 590.2,699.1 590.2,632.9 590.2,622.8 465.7,599.7 410.6,618.8ZM736.3,648.4 752.8,655.7 810.9,681.7 810.9,636.3 810.9,635.6 810.9,622.5 793.5,628.5ZM810.9,698.9 736.3,724.8 810.9,758.1Z"/>
<path fill="rgb(170,172,178)" d="M889.8,518.8 876.2,516.3 810.9,538.9 810.9,546.2ZM889.8,577.9 868.1,585.5 810.9,605.3 810.9,622.5 889.8,595.1ZM810.9,698.9 889.8,671.5 889.8,654.3 868.1,661.9 810.9,681.7Z"/>
<path fill="rgb(181,184,190)" d="M720.8,412.2 970.5,325.6 906.2,296.9 683.0,374.3ZM810.9,502.5 931.1,460.8 1027.3,427.4 906.2,373.3 739.6,431.1 796.3,487.8Z"/>
<path fill="rgb(144,145,147)" d="M656.5,383.5 683.0,374.3 656.5,347.8ZM656.5,383.5 656.5,459.9 739.6,431.1 720.8,412.2ZM710.2,485.6 716.6,486.8 656.5,459.9 656.5,504.2ZM465.7,599.7 410.6,589.5 410.6,618.8ZM410.6,618.8 410.6,695.2 506.8,661.8Z"/>
<path fill="rgb(246,248,253)" d="M720.8,412.2 739.6,431.1 906.2,373.3 1027.3,427.4 1060.6,415.9 906.2,261.2 656.5,347.8 683.0,374.3 906.2,296.9 970.5,325.6Z"/>
<path fill="rgb(150,151,155)" d="M656.5,504.2 656.5,533.5 710.2,514.9 713.7,516.5 752.8,502.9 716.6,486.8 710.2,485.6Z"/>
<path fill="rgb(212,213,216)" d="M1027.3,427.4 1060.6,442.3 1060.6,415.9ZM964.3,475.7 1060.6,518.7 1060.6,442.3ZM410.6,589.5 465.7,599.7 656.5,533.5 656.5,504.2ZM1060.6,595.1 1060.6,518.7 964.3,552.1ZM1060.6,671.5 1060.6,595.1 964.3,628.5Z"/>
</g>
<g stroke="#000" stroke-width="1.15" fill="none">
<line x1="657.4" y1="688.8" x2="753.4" y2="655.5" stroke-opacity="0.18"/>
<line x1="656.5" y1="689.1" x2="656.5" y2="675.6" stroke-opacity="0.30"/>
<line x1="656.5" y1="613.5" x2="656.5" y2="600.0" stroke-opacity="0.30"/>
<line x1="656.5" y1="599.0" x2="656.5" y2="558.0" stroke-opacity="0.30"/>
<line x1="963.8" y1="628.2" x2="1059.7" y2="671.1" stroke-opacity="0.32"/>
<line x1="906.2" y1="261.2" x2="1038.6" y2="393.9" stroke-opacity="0.42"/>
<line x1="906.2" y1="373.8" x2="906.2" y2="347.3" stroke-opacity="0.30"/>
<line x1="906.2" y1="297.7" x2="906.2" y2="262.2" stroke-opacity="0.30"/>
<line x1="1060.1" y1="416.1" x2="810.9" y2="502.5" stroke-opacity="0.30"/>
<line x1="735.5" y1="724.4" x2="656.5" y2="689.1" stroke-opacity="0.32"/>
<line x1="810.9" y1="502.5" x2="656.9" y2="348.2" stroke-opacity="0.30"/>
<line x1="810.9" y1="757.6" x2="810.9" y2="502.5" stroke-opacity="0.16"/>
<line x1="963.8" y1="551.8" x2="1059.7" y2="594.7" stroke-opacity="0.30"/>
<line x1="1060.1" y1="595.3" x2="810.9" y2="681.7" stroke-opacity="0.42"/>
<line x1="810.9" y1="681.7" x2="735.5" y2="648.0" stroke-opacity="0.42"/>
<line x1="735.5" y1="648.0" x2="656.5" y2="612.7" stroke-opacity="0.30"/>
<line x1="657.4" y1="536.0" x2="753.4" y2="502.7" stroke-opacity="0.30"/>
<line x1="963.8" y1="475.4" x2="1059.7" y2="518.3" stroke-opacity="0.30"/>
<line x1="1060.1" y1="518.9" x2="810.9" y2="605.3" stroke-opacity="0.42"/>
<line x1="810.9" y1="605.3" x2="656.5" y2="536.3" stroke-opacity="0.42"/>
<line x1="657.4" y1="459.6" x2="739.3" y2="431.2" stroke-opacity="0.30"/>
<line x1="740.2" y1="430.9" x2="906.2" y2="373.3" stroke-opacity="0.30"/>
<line x1="906.2" y1="373.3" x2="1026.8" y2="427.2" stroke-opacity="0.30"/>
<line x1="1027.7" y1="427.6" x2="1059.7" y2="441.9" stroke-opacity="0.30"/>
<line x1="1060.1" y1="442.5" x2="810.9" y2="528.9" stroke-opacity="0.42"/>
<line x1="810.9" y1="528.9" x2="657.0" y2="460.1" stroke-opacity="0.42"/>
<line x1="657.4" y1="383.2" x2="682.5" y2="374.5" stroke-opacity="0.30"/>
<line x1="683.5" y1="374.2" x2="906.2" y2="296.9" stroke-opacity="0.30"/>
<line x1="906.2" y1="296.9" x2="968.2" y2="324.6" stroke-opacity="0.30"/>
<line x1="968.2" y1="324.6" x2="969.6" y2="325.2" stroke-opacity="0.42"/>
<line x1="970.0" y1="325.8" x2="720.8" y2="412.2" stroke-opacity="0.42"/>
<line x1="720.8" y1="412.2" x2="657.0" y2="383.7" stroke-opacity="0.42"/>
<line x1="411.5" y1="694.9" x2="507.5" y2="661.6" stroke-opacity="0.32"/>
<line x1="656.8" y1="504.1" x2="710.2" y2="485.6" stroke-opacity="0.32"/>
<line x1="867.4" y1="661.5" x2="888.9" y2="671.1" stroke-opacity="0.18"/>
<line x1="710.2" y1="485.6" x2="718.6" y2="487.1" stroke-opacity="0.32"/>
<line x1="710.2" y1="515.6" x2="710.2" y2="486.1" stroke-opacity="0.18"/>
<line x1="810.4" y1="699.1" x2="737.1" y2="724.5" stroke-opacity="0.32"/>
<line x1="737.1" y1="571.8" x2="590.2" y2="622.8" stroke-opacity="0.40"/>
<line x1="590.2" y1="622.8" x2="411.1" y2="589.6" stroke-opacity="0.40"/>
<line x1="590.2" y1="775.0" x2="590.2" y2="622.8" stroke-opacity="0.16"/>
<line x1="411.5" y1="618.5" x2="464.9" y2="600.0" stroke-opacity="0.32"/>
<line x1="464.9" y1="600.0" x2="466.4" y2="599.5" stroke-opacity="0.42"/>
<line x1="466.4" y1="599.5" x2="656.8" y2="533.4" stroke-opacity="0.32"/>
<line x1="656.8" y1="533.4" x2="710.2" y2="514.9" stroke-opacity="0.16"/>
<line x1="710.2" y1="514.9" x2="714.3" y2="516.7" stroke-opacity="0.16"/>
<line x1="810.4" y1="622.7" x2="737.1" y2="648.1" stroke-opacity="0.32"/>
<line x1="737.1" y1="648.1" x2="590.2" y2="699.1" stroke-opacity="0.42"/>
<line x1="590.2" y1="699.1" x2="411.0" y2="619.0" stroke-opacity="0.42"/>
</g>
<g stroke="#000" stroke-width="1.05" fill="none" stroke-linecap="square">
<line x1="656.5" y1="347.8" x2="906.2" y2="261.2"/>
<line x1="1038.6" y1="393.9" x2="1060.6" y2="415.9"/>
<line x1="1060.6" y1="671.5" x2="810.9" y2="758.1"/>
<line x1="810.9" y1="758.1" x2="736.0" y2="724.6"/>
<line x1="410.6" y1="589.5" x2="656.8" y2="504.1"/>
<line x1="736.7" y1="724.6" x2="590.2" y2="775.5"/>
<line x1="590.2" y1="775.5" x2="410.6" y2="695.2"/>
</g>
<g stroke-width="1" fill="none" shape-rendering="crispEdges">
<line x1="656.5" y1="558.0" x2="656.5" y2="504.4" stroke="#000"/>
<line x1="656.5" y1="504.4" x2="656.5" y2="347.8" stroke="#000"/>
<line x1="1060.6" y1="671.5" x2="1060.6" y2="415.9" stroke="#55565b"/>
<line x1="410.6" y1="695.2" x2="410.6" y2="589.5" stroke="#2e2e32"/>
</g>
</svg>

</div>

</body></html>
